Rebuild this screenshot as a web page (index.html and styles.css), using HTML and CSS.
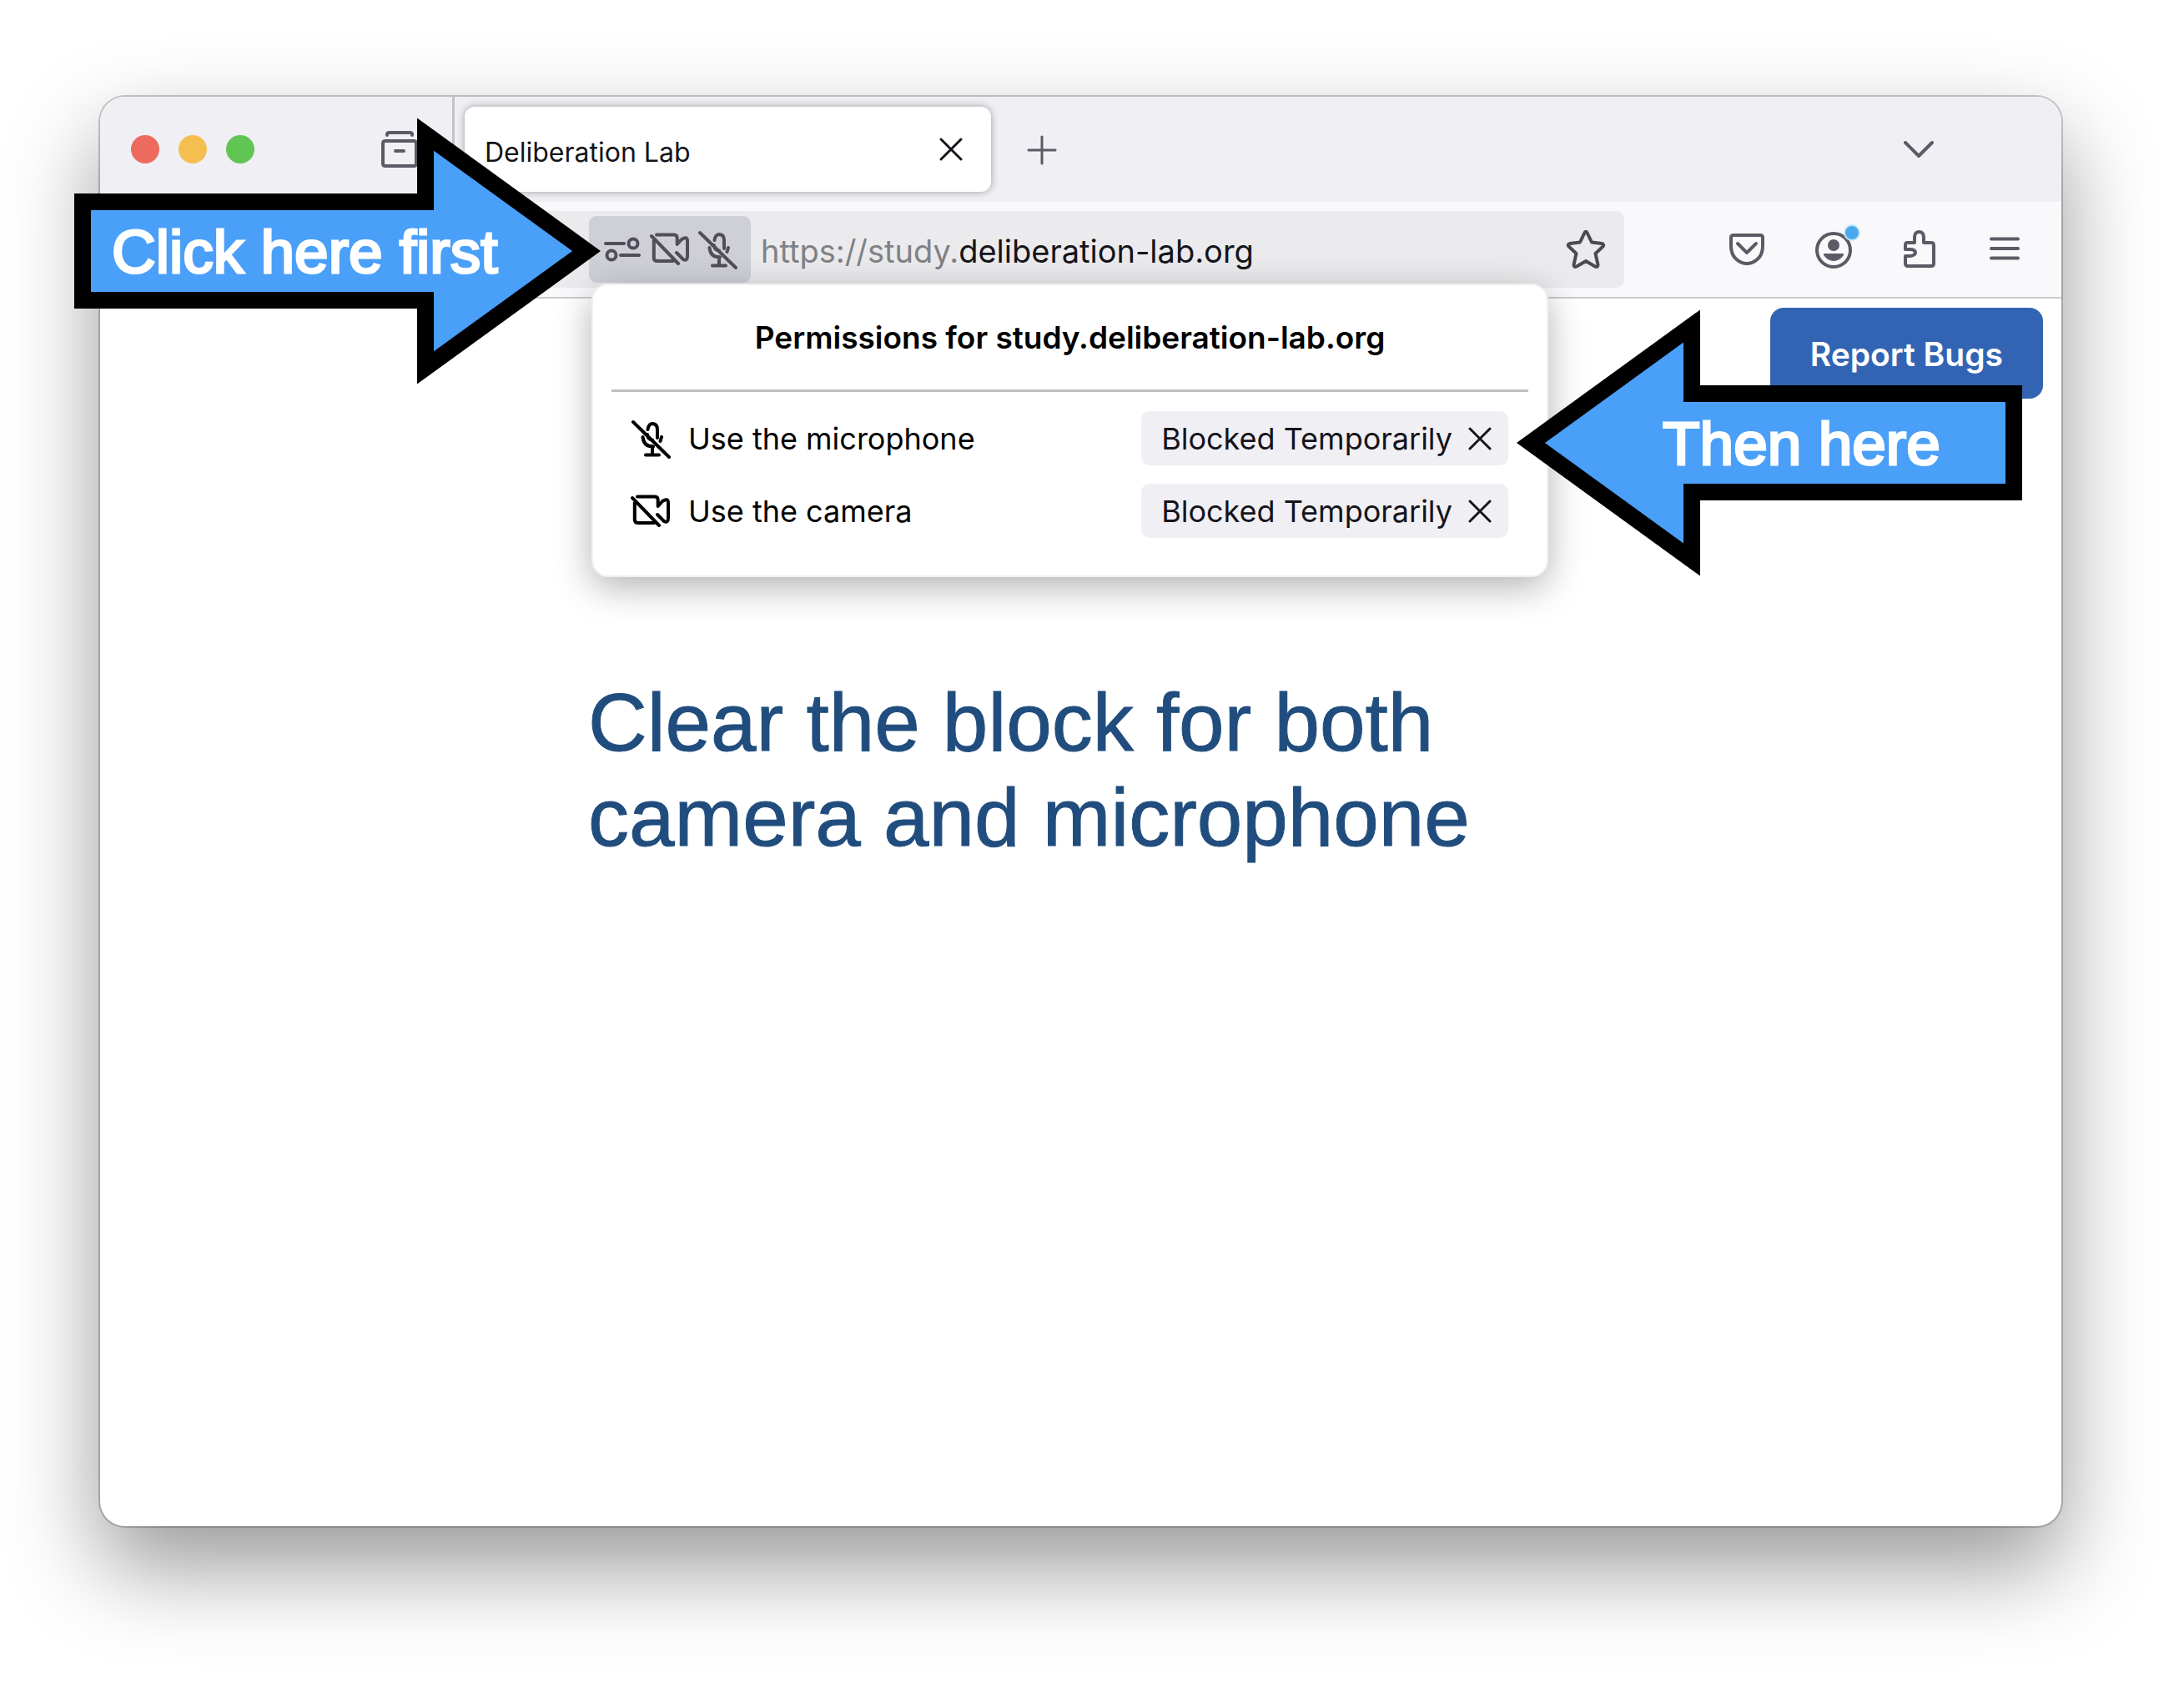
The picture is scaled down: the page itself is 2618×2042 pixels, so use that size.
FILE: index.html
```html
<!DOCTYPE html>
<html lang="en">
<head>
<meta charset="utf-8">
<title>Clear camera and microphone blocks</title>
<link rel="stylesheet" href="styles.css">
</head>
<body>
<svg class="sprite" aria-hidden="true">
  <symbol id="mic-off" viewBox="0 0 48 48">
    <path d="M3 4L46 46M20.5 13Q21.500 6 26.500 6Q32 6.500 32 13V23M20 19Q20.500 25 26 25.500M14.500 22Q15.500 33.500 27 33.500M37 22L35.500 27M26 33V43M18 43.500H34"/>
  </symbol>
  <symbol id="camera-off" viewBox="0 0 48 48">
    <path d="M2 8L34 41M8 6.500H29Q32.700 6.500 32.700 10.500V18L38 12Q45 7.500 45 14V32Q45 38.500 40 36L32 28M4.800 13V34Q4.800 38 9 38H28"/>
  </symbol>
  <symbol id="close" viewBox="0 0 30 30">
    <path d="M3 3L27 27M27 3L3 27"/>
  </symbol>
</svg>

<main class="stage">
  <section class="window">
    <header class="tabstrip">
      <div class="lights"><span class="light red"></span><span class="light amber"></span><span class="light green"></span></div>
      <button class="icon-button view-button" aria-label="Recent browsing">
        <svg class="icon" viewBox="0 0 48 48"><path d="M8 7V6Q8 4 11 4H35Q38 4 38 6V7M6 14H40Q43 14 43 17V41Q43 44 40 44H6Q3 44 3 41V17Q3 14 6 14ZM18 26H28"/></svg>
      </button>
      <div class="tab">
        <span class="tab-title">Deliberation Lab</span>
        <button class="icon-button" aria-label="Close tab"><svg class="icon tab-close"><use href="#close"/></svg></button>
      </div>
      <button class="icon-button new-tab" aria-label="New tab"><svg class="icon" viewBox="0 0 48 48"><path d="M24 9V41M8 25H40"/></svg></button>
      <button class="icon-button tab-list" aria-label="List all tabs"><svg class="icon" viewBox="0 0 48 48"><path d="M8 16L24 32L40 16"/></svg></button>
    </header>

    <div class="toolbar">
      <div class="urlbar">
        <button class="permissions" aria-label="Site permissions">
          <svg class="icon" viewBox="0 0 48 48"><path d="M4 17H26M22 31H44"/><circle cx="37" cy="17" r="5.500"/><circle cx="11" cy="31" r="5.500"/></svg>
          <svg class="icon"><use href="#camera-off"/></svg>
          <svg class="icon"><use href="#mic-off"/></svg>
        </button>
        <div class="address"><span class="muted">https://study.</span>deliberation-lab.org</div>
        <button class="icon-button" aria-label="Bookmark"><svg class="icon" viewBox="0 0 48 48"><path d="M22.500 4Q24 1.500 25.500 4L31 15.500L43 17Q46.500 18 44.500 20.500L35.500 29L38.500 42.500Q38.500 46 35 44.500L24 38L13 44.500Q9.500 46 9.500 42.500L12.500 29L3.500 20.500Q1.500 18 5 17L17 15.500Z"/></svg></button>

        <section class="popup">
          <h2 class="popup-title">Permissions for study.deliberation-lab.org</h2>
          <div class="permission">
            <svg class="icon"><use href="#mic-off"/></svg>
            <span class="permission-name">Use the microphone</span>
            <button class="state">Blocked Temporarily<svg class="state-close"><use href="#close"/></svg></button>
          </div>
          <div class="permission">
            <svg class="icon"><use href="#camera-off"/></svg>
            <span class="permission-name">Use the camera</span>
            <button class="state">Blocked Temporarily<svg class="state-close"><use href="#close"/></svg></button>
          </div>
        </section>
      </div>
      <nav class="tools">
        <button class="icon-button" aria-label="Save to Pocket"><svg class="icon" viewBox="0 0 48 48"><path d="M8 7H40Q43 7 43 10V20Q43 30 37 35.500Q31 41 24 41Q17 41 11 35.500Q5 30 5 20V10Q5 7 8 7ZM13 17L24 28L35 17"/></svg></button>
        <button class="icon-button account" aria-label="Account"><svg class="icon" viewBox="0 0 48 48"><circle cx="25" cy="25" r="20"/><circle class="solid" cx="25" cy="19" r="7"/><path class="solid" d="M14 29H36Q38 29 36.500 31.500Q32 38 25 38Q18 38 13.500 31.500Q12 29 14 29Z"/></svg><span class="dot"></span></button>
        <button class="icon-button" aria-label="Extensions"><svg class="icon" viewBox="0 0 48 48"><path d="M10 16H19V9Q19.500 3 24.500 3Q29.500 3 30 9V16H39Q42 16 42 19V41Q42 44 39 44H11Q8 44 8 41V32H14Q20 31 20 28Q20 24.500 14 24H8V19Q8 16 10 16Z"/></svg></button>
        <button class="icon-button" aria-label="Menu"><svg class="icon" viewBox="0 0 48 48"><path d="M8 11.500H40M8 23H40M8 34.500H40"/></svg></button>
      </nav>
    </div>

    <div class="page">
      <button class="report">Report Bugs</button>
      <h1 class="message">Clear the block for both camera and microphone</h1>
    </div>
  </section>

  <div class="callout first">
    <svg class="arrow" viewBox="0 0 632 320"><path d="M10 101H421V20L614 160L421 300V219H10Z"/></svg>
    <span class="callout-text">Click here first</span>
  </div>
  <div class="callout then">
    <svg class="arrow" viewBox="0 0 606 320"><path d="M596 101H210V20L17 160L210 300V219H596Z"/></svg>
    <span class="callout-text">Then here</span>
  </div>
</main>
</body>
</html>
```
FILE: styles.css
```css
* { box-sizing: border-box; }

body {
  margin: 0;
  background: #fff;
  color: #15141a;
  font-family: Inter, "Liberation Sans", sans-serif;
  font-size: 36px;
}

button {
  margin: 0;
  padding: 0;
  border: 0;
  background: none;
  color: inherit;
  font: inherit;
}

.sprite { display: none; }

.stage {
  position: relative;
  display: flex;
  min-height: 100vh;
  padding: 116px 147px 212px 120px;
  overflow: hidden;
}

.window {
  flex: 1;
  display: flex;
  flex-direction: column;
  border-radius: 30px;
  background: #fff;
  box-shadow: 0 0 0 2px rgba(0, 0, 0, 0.2), 0 48px 110px rgba(0, 0, 0, 0.41);
}

.icon {
  display: block;
  width: 48px;
  height: 48px;
  fill: none;
  stroke: #5b5b66;
  stroke-width: 4;
  stroke-linecap: round;
  stroke-linejoin: round;
}

.icon-button { flex: none; }

/* Tab strip */
.tabstrip {
  display: flex;
  align-items: center;
  height: 126px;
  border-radius: 30px 30px 0 0;
  background: #f0eff4;
}

.lights {
  display: flex;
  gap: 23px;
  padding-left: 37px;
}

.light {
  width: 34px;
  height: 34px;
  border-radius: 50%;
}

.red { background: #ec6a5e; }
.amber { background: #f5bf4f; }
.green { background: #61c554; }

.view-button {
  align-self: stretch;
  margin-left: 151px;
  padding-right: 38px;
  border-right: 3px solid #c4c3c9;
}

.tab {
  display: flex;
  align-items: center;
  justify-content: space-between;
  width: 631px;
  height: 102px;
  margin-left: 12px;
  padding: 0 33px 0 24px;
  border-radius: 12px;
  background: #fff;
  box-shadow: 0 0 10px rgba(0, 0, 0, 0.35);
}

.tab-title {
  padding-top: 6px;
  font-size: 32px;
}

.tab-close {
  width: 30px;
  height: 30px;
  stroke: #15141a;
  stroke-width: 3;
}

.new-tab { margin-left: 37px; }
.new-tab .icon { stroke-width: 3; }

.tab-list {
  margin-left: auto;
  margin-right: 147px;
}

/* Toolbar */
.toolbar {
  display: flex;
  align-items: center;
  height: 116px;
  padding: 0 44px 0 500px;
  border-bottom: 2px solid #ccccd1;
  background: #f9f9fb;
}

.urlbar {
  position: relative;
  flex: 1;
  display: flex;
  align-items: center;
  height: 92px;
  padding: 0 22px 0 86px;
  border-radius: 10px;
  background: #ebebed;
}

.urlbar > .icon-button .icon { stroke: #4a4a52; }

.permissions {
  display: flex;
  align-items: center;
  gap: 9px;
  height: 80px;
  padding: 0 16px;
  border-radius: 9px;
  background: #cfcfd8;
}

.permissions .icon { stroke: #4f4e59; }

.address {
  flex: 1;
  padding: 3px 0 0 12px;
  font-size: 38px;
}

.muted { color: #818186; }

.tools {
  display: flex;
  gap: 55px;
  padding-left: 123px;
}

.account { position: relative; }
.solid { fill: #5b5b66; stroke: none; }

.dot {
  position: absolute;
  top: -6px;
  right: -9px;
  width: 20px;
  height: 20px;
  border: 2px solid #c3e8fb;
  border-radius: 50%;
  background: #4aa9ec;
}

/* Permissions panel */
.popup {
  position: absolute;
  z-index: 1;
  top: 87px;
  left: 89px;
  width: 1147px;
  padding: 0 22px 45px;
  border: 2px solid #f0f0f4;
  border-radius: 20px;
  background: #fff;
  color: #000;
  box-shadow: 0 12px 44px rgba(0, 0, 0, 0.3);
}

.popup-title {
  margin: 0 0 23px;
  padding: 39px 0 38px;
  border-bottom: 3px solid #bfbfbf;
  font-size: 37px;
  font-weight: 600;
  line-height: 48px;
  text-align: center;
}

.permission {
  display: flex;
  align-items: center;
  padding: 0 24px 0 23px;
}

.permission + .permission { margin-top: 22px; }
.permission .icon { stroke: #000; }

.permission-name {
  flex: 1;
  padding-left: 21px;
}

.state {
  display: flex;
  align-items: center;
  gap: 18px;
  height: 65px;
  padding: 0 19px 0 24px;
  border-radius: 10px;
  background: #f0eff4;
  color: #15141a;
}

.state-close {
  width: 30px;
  height: 30px;
  stroke: #15141a;
  stroke-width: 3;
  stroke-linecap: round;
}

/* Page content */
.page { padding: 11px 22px 0 585px; }

.report {
  display: block;
  height: 109px;
  margin-left: auto;
  padding: 2px 48px 0;
  border-radius: 16px;
  background: #3364b3;
  color: #fff;
  font-size: 39px;
  font-weight: 600;
}

.message {
  max-width: 1200px;
  margin: 331px 0 0;
  color: #204d7d;
  font-family: "Liberation Sans", Arial, sans-serif;
  font-size: 98px;
  font-weight: 400;
  line-height: 114px;
  -webkit-text-stroke: 1px #204d7d;
}

/* Instruction arrows lie over the browser window */
.callout {
  position: absolute;
  z-index: 2;
  display: flex;
  align-items: center;
  height: 320px;
  color: #fff;
  font-family: "Liberation Sans", Arial, sans-serif;
  font-size: 73px;
  -webkit-text-stroke: 3px #fff;
}

.arrow {
  position: absolute;
  inset: 0;
  width: 100%;
  height: 100%;
  fill: #4a9ff8;
  stroke: #000;
  stroke-width: 20;
}

.callout-text { position: relative; }

.first {
  top: 141px;
  left: 89px;
  width: 632px;
  padding-left: 45px;
}

.then {
  top: 371px;
  left: 1818px;
  width: 606px;
  padding-left: 175px;
}
```
